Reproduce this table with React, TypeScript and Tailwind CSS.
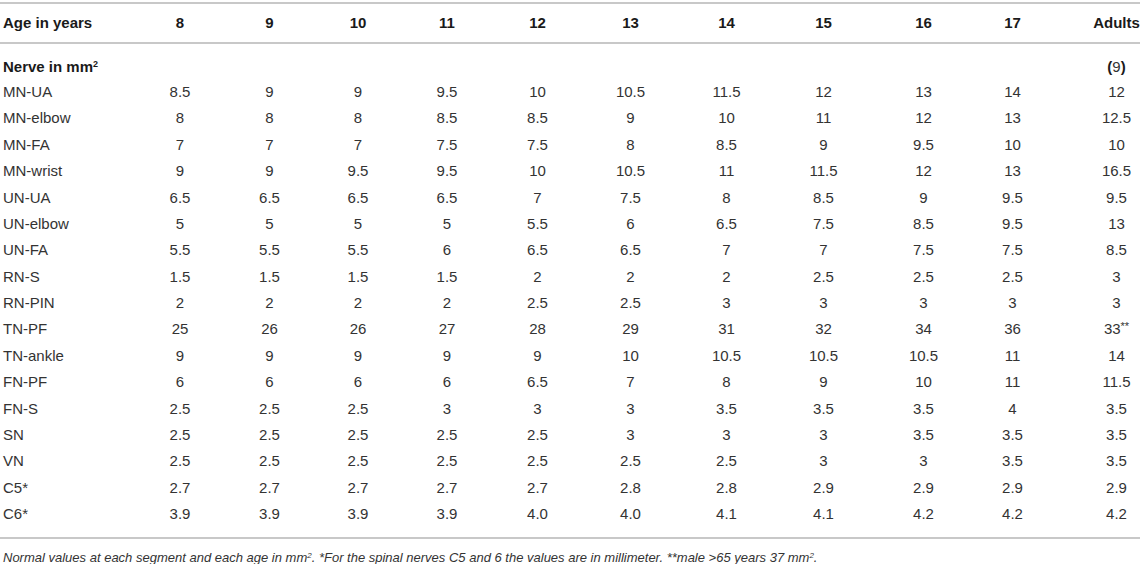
const ages = ["8", "9", "10", "11", "12", "13", "14", "15", "16", "17"];

const rows: [string, string[]][] = [
  ["MN-UA", ["8.5", "9", "9", "9.5", "10", "10.5", "11.5", "12", "13", "14", "12"]],
  ["MN-elbow", ["8", "8", "8", "8.5", "8.5", "9", "10", "11", "12", "13", "12.5"]],
  ["MN-FA", ["7", "7", "7", "7.5", "7.5", "8", "8.5", "9", "9.5", "10", "10"]],
  ["MN-wrist", ["9", "9", "9.5", "9.5", "10", "10.5", "11", "11.5", "12", "13", "16.5"]],
  ["UN-UA", ["6.5", "6.5", "6.5", "6.5", "7", "7.5", "8", "8.5", "9", "9.5", "9.5"]],
  ["UN-elbow", ["5", "5", "5", "5", "5.5", "6", "6.5", "7.5", "8.5", "9.5", "13"]],
  ["UN-FA", ["5.5", "5.5", "5.5", "6", "6.5", "6.5", "7", "7", "7.5", "7.5", "8.5"]],
  ["RN-S", ["1.5", "1.5", "1.5", "1.5", "2", "2", "2", "2.5", "2.5", "2.5", "3"]],
  ["RN-PIN", ["2", "2", "2", "2", "2.5", "2.5", "3", "3", "3", "3", "3"]],
  ["TN-PF", ["25", "26", "26", "27", "28", "29", "31", "32", "34", "36", "33**"]],
  ["TN-ankle", ["9", "9", "9", "9", "9", "10", "10.5", "10.5", "10.5", "11", "14"]],
  ["FN-PF", ["6", "6", "6", "6", "6.5", "7", "8", "9", "10", "11", "11.5"]],
  ["FN-S", ["2.5", "2.5", "2.5", "3", "3", "3", "3.5", "3.5", "3.5", "4", "3.5"]],
  ["SN", ["2.5", "2.5", "2.5", "2.5", "2.5", "3", "3", "3", "3.5", "3.5", "3.5"]],
  ["VN", ["2.5", "2.5", "2.5", "2.5", "2.5", "2.5", "2.5", "3", "3", "3.5", "3.5"]],
  ["C5*", ["2.7", "2.7", "2.7", "2.7", "2.7", "2.8", "2.8", "2.9", "2.9", "2.9", "2.9"]],
  ["C6*", ["3.9", "3.9", "3.9", "3.9", "4.0", "4.0", "4.1", "4.1", "4.2", "4.2", "4.2"]],
];

// column tracks tuned so each value sits on the same centre as the screenshot
const cols = "grid grid-cols-[135px_90px_89px_88px_90px_91px_95px_97px_97px_103px_75px_90px]";

function Value({ v }: { v: string }) {
  if (v.endsWith("**")) {
    return (
      <span>
        {v.slice(0, -2)}
        <span className="text-[11px] align-top">**</span>
      </span>
    );
  }
  return <span>{v}</span>;
}

export default function App() {
  return (
    <div className="w-[1143px] bg-white pt-[2px] font-['Liberation_Sans',Arial,sans-serif] text-[15px] text-[#333]">
      <div className="w-[1140px]">
        {/* header */}
        <div className={`${cols} h-[42px] items-center border-y-2 border-[#c8c8c8] font-bold text-[#1a1a1a]`}>
          <div className="pl-[3px]">Age in years</div>
          {ages.map((a) => (
            <div key={a} className="text-center">{a}</div>
          ))}
          <div className="pl-[43px] text-center">Adults</div>
        </div>

        <div className="pt-[11px] pb-[9px] border-b-2 border-[#c8c8c8]">
          <div className={`${cols} h-[24px] items-center`}>
            <div className="pl-[3px] font-bold text-[#1a1a1a]">
              Nerve in mm<sup className="text-[9px]">2</sup>
            </div>
            {ages.map((a) => (
              <div key={a} />
            ))}
            <div className="pl-[43px] text-center">
              <span className="font-bold text-[#1a1a1a]">(</span>9<span className="font-bold text-[#1a1a1a]">)</span>
            </div>
          </div>
          {rows.map(([name, vals]) => (
            <div key={name} className={`${cols} h-[26.4px] items-center`}>
              <div className="pl-[3px]">{name}</div>
              {vals.slice(0, 10).map((v, i) => (
                <div key={i} className="text-center">
                  <Value v={v} />
                </div>
              ))}
              <div className="pl-[43px] text-center">
                <Value v={vals[10]} />
              </div>
            </div>
          ))}
        </div>

        <p className="pl-[3px] pt-[9px] text-[13px] italic text-[#333]">
          Normal values at each segment and each age in mm<sup className="text-[8px]">2</sup>. *For the spinal nerves C5 and 6 the values are in millimeter. **male &gt;65 years 37 mm<sup className="text-[8px]">2</sup>.
        </p>
      </div>
    </div>
  );
}
